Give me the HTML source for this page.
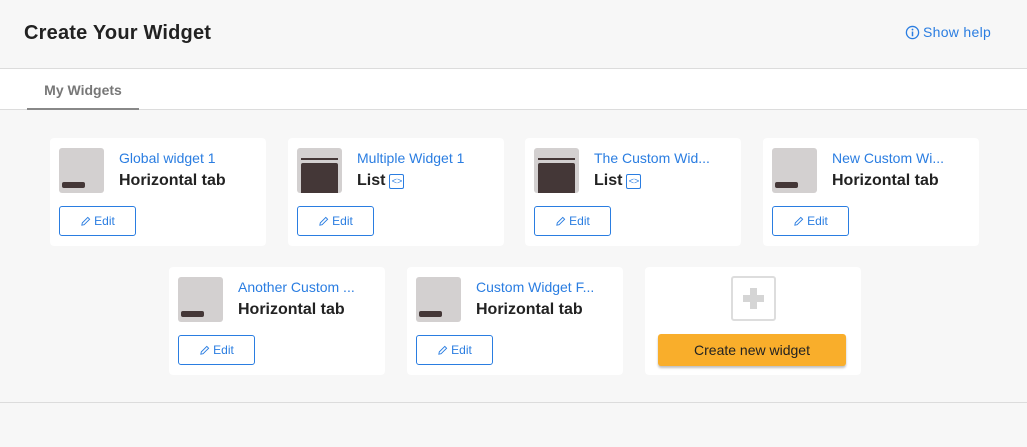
<!DOCTYPE html>
<html><head><style>
*{box-sizing:border-box;margin:0;padding:0}
body{width:1027px;height:447px;background:#f7f7f7;font-family:"Liberation Sans",sans-serif;position:relative;overflow:hidden}
.hdr{position:absolute;left:0;top:0;width:1027px;height:69px;border-bottom:1px solid #dcdcdc;background:#f7f7f7}
.hdr h1{position:absolute;left:24px;top:22px;font-size:20px;font-weight:bold;color:#222;letter-spacing:0.2px}
.help{position:absolute;left:905px;top:24px;font-size:14px;color:#2a7de1;display:flex;align-items:center;gap:3px;letter-spacing:0.3px}
.tabs{position:absolute;left:0;top:69px;width:1027px;height:41px;background:#fff;border-bottom:1px solid #dcdcdc}
.tab{position:absolute;left:27px;top:0;width:112px;height:41px;border-bottom:2px solid #888;font-size:14px;font-weight:bold;color:#777;text-align:center;padding-top:13px}
.foot{position:absolute;left:0;top:402px;width:1027px;border-top:1px solid #dcdcdc}
.card{position:absolute;width:216px;height:108px;background:#fff;border-radius:4px}
.th{position:absolute;left:9px;top:10px;width:45px;height:45px;background:#d3d0d0;border-radius:3px;overflow:hidden}
.th .bar{position:absolute;left:3px;top:34px;width:23px;height:6px;background:#443737;border-radius:2px}
.th .l1{position:absolute;left:4px;top:10px;width:37px;height:2px;background:#443737}
.th .l2{position:absolute;left:4px;top:15px;width:37px;height:30px;background:#443737;border-radius:2px 2px 0 0}
.t{position:absolute;left:69px;top:12px;font-size:14px;color:#2a7de1;white-space:nowrap}
.s{position:absolute;left:69px;top:34px;font-size:16px;font-weight:bold;color:#222;display:flex;align-items:center;gap:4px}
.code{display:inline-block;width:15px;height:15px;border:1px solid #2a7de1;border-radius:2px;color:#2a7de1;font-size:9px;line-height:12px;text-align:center;font-weight:normal}
.ed{position:absolute;left:9px;top:68px;width:77px;height:30px;border:1px solid #2a7de1;border-radius:3px;color:#2a7de1;font-size:12px;display:flex;align-items:center;justify-content:center;gap:3px}
.plus{position:absolute;left:86px;top:9px;width:45px;height:45px;border:2px solid #ddd;border-radius:3px}
.plus:before{content:"";position:absolute;left:10px;top:17px;width:21px;height:7px;background:#d5d5d5}
.plus:after{content:"";position:absolute;left:17px;top:10px;width:7px;height:21px;background:#d5d5d5}
.cr{position:absolute;left:13px;top:67px;width:188px;height:32px;background:#f9ae2b;border-radius:3px;box-shadow:0 2px 2px rgba(0,0,0,.25);font-size:14px;color:#222;text-align:center;line-height:32px}
</style></head><body>
<div class="hdr"><h1>Create Your Widget</h1>
<div class="help"><svg width="15" height="15" viewBox="0 0 16 16"><circle cx="8" cy="8" r="6.5" fill="none" stroke="#2a7de1" stroke-width="1.4"/><rect x="7.2" y="7" width="1.6" height="5" fill="#2a7de1"/><circle cx="8" cy="4.8" r="1" fill="#2a7de1"/></svg>Show help</div></div>
<div class="tabs"><div class="tab">My Widgets</div></div>
<div class="foot"></div>

<div class="card" style="left:50px;top:138px"><div class="th"><div class="bar"></div></div><div class="t">Global widget 1</div><div class="s">Horizontal tab</div><div class="ed"><svg width="11" height="11" viewBox="0 0 12 12"><path d="M2 10l.5-2.5L8.5 1.5l2 2-6 6z" fill="none" stroke="#2a7de1"/></svg>Edit</div></div>
<div class="card" style="left:288px;top:138px"><div class="th"><div class="l1"></div><div class="l2"></div></div><div class="t">Multiple Widget 1</div><div class="s">List <span class="code">&lt;&gt;</span></div><div class="ed"><svg width="11" height="11" viewBox="0 0 12 12"><path d="M2 10l.5-2.5L8.5 1.5l2 2-6 6z" fill="none" stroke="#2a7de1"/></svg>Edit</div></div>
<div class="card" style="left:525px;top:138px"><div class="th"><div class="l1"></div><div class="l2"></div></div><div class="t">The Custom Wid...</div><div class="s">List <span class="code">&lt;&gt;</span></div><div class="ed"><svg width="11" height="11" viewBox="0 0 12 12"><path d="M2 10l.5-2.5L8.5 1.5l2 2-6 6z" fill="none" stroke="#2a7de1"/></svg>Edit</div></div>
<div class="card" style="left:763px;top:138px"><div class="th"><div class="bar"></div></div><div class="t">New Custom Wi...</div><div class="s">Horizontal tab</div><div class="ed"><svg width="11" height="11" viewBox="0 0 12 12"><path d="M2 10l.5-2.5L8.5 1.5l2 2-6 6z" fill="none" stroke="#2a7de1"/></svg>Edit</div></div>
<div class="card" style="left:169px;top:267px"><div class="th"><div class="bar"></div></div><div class="t">Another Custom ...</div><div class="s">Horizontal tab</div><div class="ed"><svg width="11" height="11" viewBox="0 0 12 12"><path d="M2 10l.5-2.5L8.5 1.5l2 2-6 6z" fill="none" stroke="#2a7de1"/></svg>Edit</div></div>
<div class="card" style="left:407px;top:267px"><div class="th"><div class="bar"></div></div><div class="t">Custom Widget F...</div><div class="s">Horizontal tab</div><div class="ed"><svg width="11" height="11" viewBox="0 0 12 12"><path d="M2 10l.5-2.5L8.5 1.5l2 2-6 6z" fill="none" stroke="#2a7de1"/></svg>Edit</div></div>
<div class="card" style="left:645px;top:267px"><div class="plus"></div><div class="cr">Create new widget</div></div>
</body></html>
